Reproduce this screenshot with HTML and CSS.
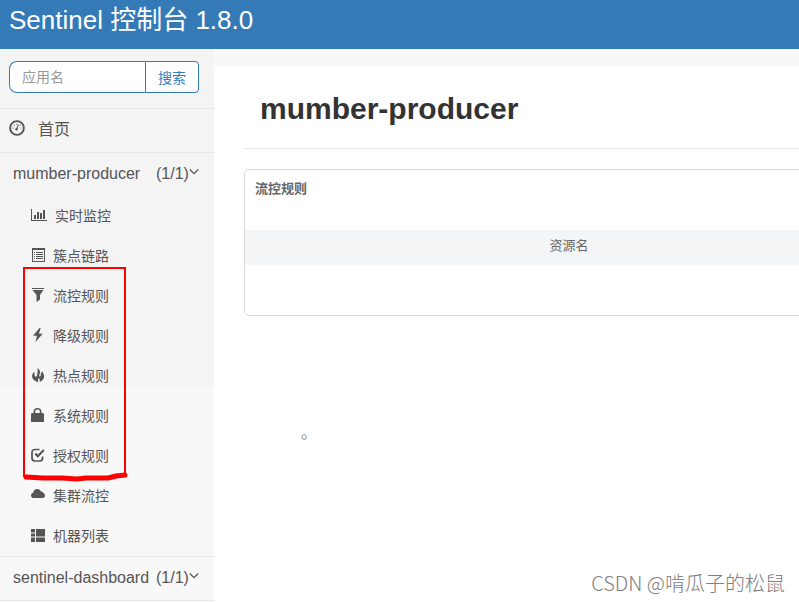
FILE: index.html
```html
<!DOCTYPE html>
<html lang="zh-CN">
<head>
    <meta charset="UTF-8">
    <meta name="viewport" content="width=device-width, initial-scale=1.0">
    <title>Sentinel 控制台</title>
    <link rel="stylesheet" href="styles.css">
</head>
<body>
    <header class="navbar">
        <a class="navbar-brand" href="#">Sentinel 控制台 1.8.0</a>
    </header>

    <div class="layout">
        <nav class="sidebar">
            <form class="search-form">
                <input class="search-input" type="text" placeholder="应用名" aria-label="应用名">
                <button class="search-button" type="button">搜索</button>
            </form>

            <a class="home-link" href="#">
                <svg class="home-icon" viewBox="0 0 16 16" aria-hidden="true">
                    <circle cx="8" cy="8" r="6.9" fill="none" stroke="currentColor" stroke-width="1.9"/>
                    <path d="M7.4 9.6 9.4 4.4" stroke="currentColor" stroke-width="1.1"/>
                    <circle cx="7.6" cy="9.2" r="1.2"/>
                    <path d="M3.4 7.5h1v1h-1zM4.8 4.8h1v1h-1zM7.2 3.4h1v1h-1zM10.6 4.8h1v1h-1zM11.6 7.5h1v1h-1z"/>
                </svg>
                首页
            </a>

            <a class="app-link" href="#">
                <span class="app-name">mumber-producer</span>
                <span>(1/1)</span>
                <svg class="arrow" viewBox="0 0 10 8" aria-hidden="true"><path d="M.8 1.5 5 5.7 9.2 1.5" fill="none" stroke="currentColor" stroke-width="1.3"/></svg>
            </a>

            <div class="submenu">
                <a class="menu-link" href="#">
                    <svg class="chart-icon" viewBox="0 0 16 14" aria-hidden="true"><path d="M0 1h1v11h15v1H0zM3 7h2v4H3zM6 4h2v7H6zM9 5h2v6H9zM12 2h2v9h-2z"/></svg>
                    实时监控
                </a>
                <a class="menu-link" href="#">
                    <svg viewBox="0 0 14 14" aria-hidden="true"><path fill-rule="evenodd" d="M1 0h13v14H1zM2 2v11h11V2zM3 4h1v1H3zM5 4h7v1H5zM3 6h1v1H3zM5 6h7v1H5zM3 8h1v1H3zM5 8h7v1H5zM3 10h1v1H3zM5 10h7v1H5z"/></svg>
                    簇点链路
                </a>
                <a class="menu-link" href="#">
                    <svg viewBox="0 0 14 14" aria-hidden="true"><path d="M1 0h12v1H1zM1.500 2h11L9 7v4.500L5.500 14V7z"/></svg>
                    流控规则
                </a>
                <a class="menu-link" href="#">
                    <svg viewBox="0 0 14 14" aria-hidden="true"><path d="M8.500 0 2 7.800h4L4.400 14 11.800 5.800H7.900L9.700 0z"/></svg>
                    降级规则
                </a>
                <a class="menu-link" href="#">
                    <svg viewBox="0 0 14 14" aria-hidden="true"><path d="M6 0c3 1.400 3.800 3.600 2.700 6.100-.5 1.200-.8 2.100.1 2.700.9-.4 1.100-1.300.9-2.200-.1-1.300.9-2.300 1.900-3.300-.3 1.500 1.400 2.700 1.500 4.700.1 2.500-1.300 5-4.600 6 .7-1.500.4-3-.8-4-.5.8-.8 2-.5 4C3.500 13 1 11 1.100 7.700 1.200 6 2.100 4.800 3.600 3.700c-.3 1.500-.3 2.800.2 4.300.3.800 1 1.100 1.600.6.900-.9.700-1.900.9-2.900C6.700 3.800 7.200 2.300 6 0z"/></svg>
                    热点规则
                </a>
                <a class="menu-link" href="#">
                    <svg viewBox="0 0 14 14" aria-hidden="true"><path fill-rule="evenodd" d="M2.500 5V3.500C2.500 1.300 4 0 6.500 0s4 1.300 4 3.500V5h1.500L13 6v8H0V6l1-1zM4.200 5h4.600V3.500C8.800 2.300 8 1.600 6.500 1.600s-2.300.7-2.300 1.900z"/></svg>
                    系统规则
                </a>
                <a class="menu-link" href="#">
                    <svg viewBox="0 0 14 14" aria-hidden="true"><path d="M8.500 1.500H4Q1 1.500 1 4.500V10q0 3 3 3h5q2.600 0 2.600-3V8.500" fill="none" stroke="currentColor" stroke-width="1.700"/><path d="M4.300 5.500 6.800 8.200 12.800 2" fill="none" stroke="currentColor" stroke-width="2.200"/></svg>
                    授权规则
                </a>
                <a class="menu-link" href="#">
                    <svg viewBox="0 0 14 14" aria-hidden="true"><path d="M3 10Q0 10 0 7.200 0 5 2.400 4.500 2.800 1 6.200 1c2 0 3.200 1 3.700 2.500Q12 3.200 12.400 5 14 5.700 14 7.500 14 10 11.500 10z"/></svg>
                    集群流控
                </a>
                <a class="menu-link" href="#">
                    <svg viewBox="0 0 14 14" aria-hidden="true"><path d="M0 1h4v3.500H0zM5 1h9v7.500H5zM0 5.500h4v3H0zM0 9.500h4V14H0zM5 9.500h9V14H5z"/></svg>
                    机器列表
                </a>

                <svg class="marker" viewBox="0 0 106 216" aria-hidden="true">
                    <path d="M2 211V2h101v206" fill="none" stroke="#f00" stroke-width="2"/>
                    <path d="M4 211 21 212 40 212 55 213 64 212 86 212 94 210 103 209" fill="none" stroke="#f00" stroke-width="5" stroke-linecap="round" stroke-linejoin="round"/>
                </svg>
            </div>

            <a class="app-link app-link-bordered" href="#">
                <span class="app-name">sentinel-dashboard</span>
                <span>(1/1)</span>
                <svg class="arrow" viewBox="0 0 10 8" aria-hidden="true"><path d="M.8 1.5 5 5.7 9.2 1.5" fill="none" stroke="currentColor" stroke-width="1.3"/></svg>
            </a>
        </nav>

        <main class="content">
            <h1 class="page-title">mumber-producer</h1>
            <section class="card">
                <h2 class="card-title">流控规则</h2>
                <table class="rule-table">
                    <thead>
                        <tr><th>资源名</th></tr>
                    </thead>
                </table>
            </section>
            <p class="note">。</p>
        </main>
    </div>

    <div class="watermark">CSDN @啃瓜子的松鼠</div>
</body>
</html>
```
FILE: styles.css
```css
* {
    box-sizing: border-box;
}
body {
    margin: 0;
    min-height: 100vh;
    display: flex;
    flex-direction: column;
    font-family: "Liberation Sans", "Noto Sans CJK SC", sans-serif;
    color: #555;
    background-color: #fff;
    overflow: hidden;
}
a {
    color: inherit;
    text-decoration: none;
}
svg {
    fill: currentColor;
    flex: none;
}
.navbar {
    height: 49px;
    padding: 0 9px;
    background-color: #337ab7;
}
.navbar-brand {
    color: #fff;
    font-size: 26px;
    line-height: 40px;
}
.layout {
    flex: 1;
    display: flex;
}

/* Sidebar */
.sidebar {
    flex: none;
    width: 214px;
    background: linear-gradient(#f4f4f4 337px, #f8f8f8 337px);
}
.search-form {
    display: flex;
    padding: 12px 15px 15px 9px;
}
.search-input {
    flex: 1;
    min-width: 0;
    height: 32px;
    padding: 0 12px;
    border: 1px solid #337ab7;
    border-right: none;
    border-radius: 8px 0 0 8px;
    background-color: #fff;
    font: inherit;
    font-size: 14px;
}
.search-input::placeholder {
    color: #999;
}
.search-button {
    width: 54px;
    height: 32px;
    padding: 0;
    border: 1px solid #337ab7;
    border-radius: 0 4px 4px 0;
    background-color: #fff;
    color: #337ab7;
    font: inherit;
    font-size: 14px;
    cursor: pointer;
}
.home-link {
    display: flex;
    align-items: center;
    gap: 13px;
    height: 45px;
    padding: 0 9px 5px;
    border-top: 1px solid #e7e7e7;
    border-bottom: 1px solid #e7e7e7;
    font-size: 16px;
}
.home-icon {
    width: 16px;
    height: 16px;
}
.app-link {
    display: flex;
    align-items: center;
    height: 43px;
    padding: 0 14px 2px 13px;
    font-size: 16px;
}
.app-link-bordered {
    height: 45px;
    border-top: 1px solid #e7e7e7;
    border-bottom: 1px solid #e7e7e7;
}
.app-name {
    width: 143px;
}
.arrow {
    width: 10px;
    height: 8px;
    margin-bottom: 4px;
}
.submenu {
    position: relative;
}
.menu-link {
    display: flex;
    align-items: center;
    gap: 8px;
    height: 40px;
    padding: 0 0 2px 31px;
    font-size: 14px;
}
.menu-link svg {
    width: 14px;
    height: 14px;
}
.menu-link .chart-icon {
    width: 16px;
}
.submenu .marker {
    position: absolute;
    top: 70px;
    left: 22px;
    width: 106px;
    height: 216px;
}

/* Content */
.content {
    flex: 1;
    min-width: 0;
    padding-left: 30px;
    border-top: 17px solid #f8f8f8;
    overflow: hidden;
}
.page-title {
    margin: 0 0 20px;
    padding: 22px 16px 18px;
    border-bottom: 1px solid #e5e5e5;
    color: #333;
    font-size: 30px;
    line-height: 42px;
}
.card {
    min-width: 650px;
    height: 147px;
    border: 1px solid #d9dbdc;
    border-radius: 5px;
}
.card-title {
    margin: 0;
    padding: 9px 10px 31px;
    color: #666;
    font-size: 13px;
    line-height: 20px;
}
.rule-table {
    width: 100%;
    border-collapse: collapse;
}
.rule-table th {
    height: 35px;
    padding: 0 0 4px;
    background-color: #f3f5f7;
    color: #666;
    font-size: 13px;
    font-weight: normal;
    line-height: 20px;
    text-align: center;
}
.note {
    margin: 109px 0 0 57px;
    color: #889;
    font-size: 16px;
    line-height: 16px;
}
.watermark {
    position: absolute;
    right: 14px;
    bottom: 4px;
    color: #808080;
    font-family: "Noto Sans CJK SC", sans-serif;
    font-size: 20px;
    font-weight: 300;
    line-height: 30px;
}
```
